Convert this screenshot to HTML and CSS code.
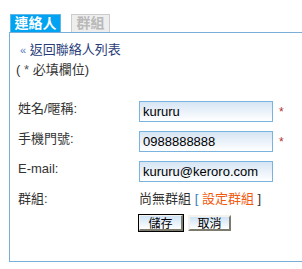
FILE: index.html
```html
<!DOCTYPE html>
<html lang="zh-Hant">
<head>
  <meta charset="UTF-8">
  <meta name="viewport" content="width=device-width, initial-scale=1.0">
  <title>編輯聯絡人</title>
  <link rel="stylesheet" href="styles.css">
</head>
<body>
  <div class="tabs">
    <span class="tab active">連絡人</span>
    <span class="tab">群組</span>
  </div>
  <div class="panel">
    <a class="back" href="#"><span class="raquo">&laquo;</span> 返回聯絡人列表</a>
    <div class="note">( <span class="star">*</span> 必填欄位)</div>
    <form class="contact-form">
      <label class="label">姓名/暱稱:</label>
      <div class="field"><input type="text" value="kururu"><span class="req">*</span></div>

      <label class="label">手機門號:</label>
      <div class="field"><input type="text" value="0988888888"><span class="req">*</span></div>

      <label class="label">E-mail:</label>
      <div class="field"><input type="text" value="kururu@keroro.com"></div>

      <span class="label">群組:</span>
      <div class="group">尚無群組 <span class="bracket">[</span> <a href="#">設定群組</a> <span>]</span></div>

      <span></span>
      <div class="buttons">
        <button type="submit" class="default">儲存</button>
        <button type="button">取消</button>
      </div>
    </form>
  </div>
</body>
</html>
```

FILE: styles.css
```css
body {
  font-family: "Liberation Sans", "Noto Sans CJK TC", sans-serif;
  font-size: 13px;
  color: #333;
  margin: 0;
  padding: 0;
  background: #fff;
}

.tabs {
  display: flex;
  gap: 10px;
  margin-top: 14px;
  padding-left: 10px;
  height: 18px;
}

.tab {
  box-sizing: border-box;
  width: 39px;
  height: 18px;
  padding: 0;
  text-align: center;
  font-weight: bold;
  font-size: 14px;
  line-height: 16px;
  color: #b9b9b9;
  background: #eeeeee;
  border: 1px solid #cccccc;
  border-bottom: none;
}

.tab.active {
  width: 51px;
  color: #fff;
  background: #00a2f2;
  border-color: #62b6e6;
}

.panel {
  margin-left: 9px;
  height: 230px;
  border: 1px solid #7aafd9;
  border-right: none;
  padding: 7px 0 0 6px;
  box-sizing: border-box;
}

.back {
  display: block;
  padding-left: 4px;
  line-height: 20px;
  color: #2a3d7a;
  text-decoration: none;
}

.raquo {
  color: #5577bb;
  font-size: 11px;
}

.note {
  line-height: 20px;
  color: #333;
}

.star {
  color: #555;
}

.contact-form {
  display: grid;
  grid-template-columns: 121px auto;
  grid-template-rows: 21px 21px 21px 15px 16px;
  row-gap: 9px;
  margin-top: 21px;
  padding-left: 2px;
}

.label {
  line-height: 16px;
  color: #333;
}

.field {
  display: flex;
  align-items: center;
}

input {
  box-sizing: border-box;
  width: 134px;
  height: 21px;
  padding: 0 3px;
  border: 1px solid #7ab4de;
  background: linear-gradient(#d6e5f4, #ffffff);
  font-family: "Liberation Sans", sans-serif;
  font-size: 13px;
  color: #000;
}

.req {
  margin-left: 6px;
  color: #a33;
  font-size: 12px;
}

.group {
  line-height: 16px;
  white-space: nowrap;
}

.bracket {
  color: #3b7bc4;
}

.group a {
  color: #f25a10;
  text-decoration: none;
}

.buttons {
  display: flex;
  gap: 5px;
}

button {
  box-sizing: border-box;
  width: 43px;
  height: 16px;
  padding: 0;
  font-family: "Noto Sans CJK TC", sans-serif;
  font-size: 12px;
  line-height: 12px;
  color: #000;
  background: linear-gradient(#cfe3f6, #ffffff);
  border: 2px solid;
  border-color: #f4f2ea #7d7a6e #7d7a6e #f4f2ea;
}

button.default {
  width: 44px;
  outline: 1px solid #000;
  outline-offset: 0;
  border-width: 1px 2px 2px 1px;
}
```
